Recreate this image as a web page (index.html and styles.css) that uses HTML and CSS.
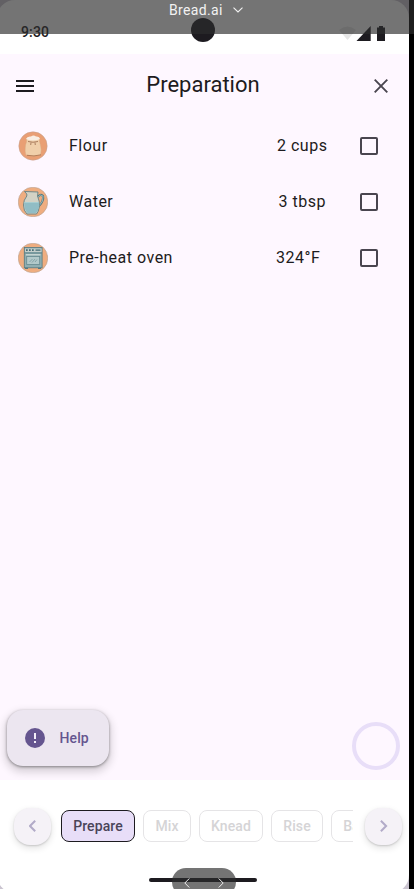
FILE: index.html
```
<!DOCTYPE html>
<html lang="en">
<head>
<meta charset="utf-8">
<title>Bread.ai</title>
<link rel="stylesheet" href="styles.css">
</head>
<body>
<div class="frame">
<div class="device">
  <header class="status">
    <span class="time">9:30</span>
    <svg class="signals" width="48" height="18" viewBox="0 0 48 18">
      <path d="M0 4Q8.500-3 17 4L8.500 14Z" fill="#e6e6e6"/>
      <path d="M17.500 15 31.700 0V15Z" fill="#1d1b20"/>
      <path d="M38 1.500h2V0h4v1.500h2V14.500q0 .5-.5.5h-7q-.5 0-.5-.5Z" fill="#1d1b20"/>
    </svg>
  </header>
  <main class="content">
    <div class="appbar">
      <svg width="18" height="12" viewBox="0 0 18 12"><path d="M0 1h18M0 6h18M0 11h18" stroke="#1d1b20" stroke-width="2"/></svg>
      <h1>Preparation</h1>
      <svg width="14" height="14" viewBox="0 0 14 14"><path d="M.7.7l12.600 12.600M13.300.7.7 13.300" stroke="#49454f" stroke-width="1.900"/></svg>
    </div>
    <ul class="list">
      <li>
        <svg class="thumb" viewBox="0 0 30 30">
          <circle cx="15" cy="15" r="14.200" fill="#e99f74" stroke="#c3a497" stroke-width=".5"/>
          <path d="M8.500 7Q9 11 7.500 14 6.500 21 8 24 15 26.500 22.500 24 24 19 22.200 13 21 10 21.500 7Z" fill="#f0cfaa" stroke="#d5a67c" stroke-width=".4"/>
          <path d="M8 8Q9 5 13 5.500 15.500 3.500 18 5.500 21.500 5 22 8 15 11 8 8Z" fill="#f8eee3"/>
          <path d="M10 10.500Q15 12 20 10.500M13 11.500 12.700 14M17 11.500l.3 2.500" fill="none" stroke="#99694b" stroke-width=".8"/>
          <path d="M9 24.300q7 1.500 14-.5" fill="none" stroke="#a66c49" stroke-width=".8"/>
        </svg>
        <span class="name">Flour</span><span class="amount cups">2 cups</span><span class="box"></span>
      </li>
      <li>
        <svg class="thumb" viewBox="0 0 30 30">
          <circle cx="15" cy="15" r="14.800" fill="#efad80" stroke="#aaa099" stroke-width=".5"/>
          <path d="M20 10Q22 6.500 25 9 26 14 21 19" fill="none" stroke="#547980" stroke-width="2.200"/>
          <path d="M20 10Q22 6.500 25 9 26 14 21 19" fill="none" stroke="#9dbbbb" stroke-width=".9"/>
          <path d="M6.500 4.500 20 5 19.500 9Q22 14 21.300 20 20.500 25 18.500 27H9Q5.500 24 5.500 18 5.500 13 8.800 9V7Z" fill="#d3d2c5" stroke="#547980" stroke-width=".8"/>
          <path d="M6.200 15H21Q22 22 18 26H9.500Q6 23 6.200 15Z" fill="#91bdc5"/>
          <path d="M6.500 15.500h14" stroke="#a9ced1"/>
        </svg>
        <span class="name">Water</span><span class="amount tbsp">3 tbsp</span><span class="box"></span>
      </li>
      <li>
        <svg class="thumb" viewBox="0 0 30 30">
          <circle cx="15" cy="15" r="14.800" fill="#efad80" stroke="#aaa099" stroke-width=".5"/>
          <path d="M7 24h3v2H7ZM20 24h3v2h-3Z" fill="#547980"/>
          <rect x="6.300" y="4.500" width="17.800" height="20.300" fill="#8faeb1" stroke="#547980" stroke-width=".8"/>
          <path d="M7 5.500h16.500v3.500H7Z" fill="#c3cecb"/>
          <path d="M8 7.200h8" stroke="#456c75" stroke-width="1.700" stroke-dasharray="1.700 1.300"/>
          <path d="M17.500 7.200h5" stroke="#456c75" stroke-width="1.300"/>
          <path d="M6.500 10h17.500" stroke="#547980" stroke-width=".8"/>
          <path d="M8 11.800h14.500" stroke="#dce4df" stroke-width="1"/>
          <rect x="8.700" y="13.500" width="13" height="8" fill="#b2c9ca" stroke="#668990" stroke-width=".8"/>
          <path d="m11.500 19 3-3m-.5 3.500 3-3.500m0 3 2-2.500" stroke="#668a91" stroke-width=".6"/>
        </svg>
        <span class="name">Pre-heat oven</span><span class="amount temp">324°F</span><span class="box"></span>
      </li>
    </ul>
    <div class="floating">
      <button class="help">
        <svg width="20" height="20" viewBox="0 0 20 20"><circle cx="10" cy="10" r="10" fill="#65558f"/><path d="M10 5v6M10 13v2" stroke="#f4eff8" stroke-width="2"/></svg>
        <span>Help</span>
      </button>
      <span class="ring"></span>
    </div>
  </main>
  <nav class="steps">
    <button class="round"><svg width="8" height="12" viewBox="0 0 8 12"><path d="M6.200.8 1 6l5.200 5.200" fill="none" stroke="#b2abc8" stroke-width="2"/></svg></button>
    <div class="chips">
      <span class="chip active">Prepare</span><span class="chip mix">Mix</span><span class="chip knead">Knead</span><span class="chip rise">Rise</span><span class="chip bake">Bake</span>
    </div>
    <button class="round"><svg width="8" height="12" viewBox="0 0 8 12"><path d="M.9.8 6.100 6 .9 11.200" fill="none" stroke="#b2abc8" stroke-width="2"/></svg></button>
  </nav>
  <div class="handle"></div>
</div>
<span class="camera"></span>
<div class="topbar"><span>Bread.ai</span><svg width="10" height="6" viewBox="0 0 10 6"><path d="m.5.7 4.500 4.300L9.500.7" fill="none" stroke="#f2f2f2" stroke-width="1.100"/></svg></div>
<div class="pager">
  <svg width="6" height="10" viewBox="0 0 6 10"><path d="M5.300.5.800 5l4.500 4.500" fill="none" stroke="#eee" stroke-width="1"/></svg>
  <svg width="6" height="10" viewBox="0 0 6 10"><path d="M.7.5 5.200 5 .7 9.500" fill="none" stroke="#eee" stroke-width="1"/></svg>
</div>
</div>
</body>
</html>
```
FILE: styles.css
```
* { box-sizing: border-box; }
body { margin: 0; background: #000; font-family: Roboto, sans-serif; color: #1d1b20; }
button { border: 0; padding: 0; font: inherit; }
.frame { position: relative; width: 414px; height: 889px; overflow: hidden; background: linear-gradient(90deg, #cac4d0 409px, #000 409px); }
.device { width: 412px; height: 893px; margin-left: -3px; padding-left: 3px; border-radius: 18px; overflow: hidden; background: #fff; }
.status { height: 54px; display: flex; justify-content: space-between; padding: 24px 22px 0 21px; }
.time { font-size: 14px; line-height: 16px; font-weight: 500; letter-spacing: .14px; }
.signals { margin-top: 2px; }
.content { height: 726px; background: #fef7ff; display: flex; flex-direction: column; }
.appbar { height: 64px; display: flex; align-items: center; justify-content: space-between; padding: 0 21px 0 16px; }
h1 { margin: 0 2px 2px 0; font-size: 22px; line-height: 28px; font-weight: 400; }
.list { list-style: none; margin: 0; padding: 0; }
.list li { height: 56px; display: flex; align-items: center; padding-left: 18px; }
.thumb { width: 30px; height: 30px; }
.name { width: 207px; margin-left: 21px; padding-bottom: 2px; font-size: 16px; letter-spacing: .5px; }
.amount { width: 84px; padding-bottom: 2px; font-size: 16px; letter-spacing: .5px; }
.cups { padding-left: 1px; }
.tbsp { padding-left: 2.5px; }
.box { width: 18px; height: 18px; border: 2px solid #49454f; border-radius: 2px; }
.floating { margin-top: auto; padding: 0 9px 10px 7px; display: flex; justify-content: space-between; align-items: flex-end; }
.help { width: 102px; height: 56px; margin-bottom: 4px; border-radius: 16px; display: flex; align-items: center; gap: 14.500px; padding-left: 18px; background: #ece6f0; color: #65558f; font-size: 14px; font-weight: 500; letter-spacing: .1px; box-shadow: 0 1px 3px rgba(0,0,0,.4), 0 4px 8px 2px rgba(0,0,0,.16); }
.ring { width: 48px; height: 48px; border: 4px solid #e8def8; border-radius: 50%; }
.steps { height: 92px; display: flex; align-items: center; padding: 0 7px 0 14px; }
.round { flex: none; width: 37px; height: 37px; border-radius: 16px; display: flex; align-items: center; justify-content: center; background: #f5f2f7; box-shadow: 0 1px 2px rgba(0,0,0,.16), 0 3px 6px 1px rgba(0,0,0,.09); }
.chips { width: 292px; margin: 0 12px 0 10px; display: flex; gap: 8px; overflow: hidden; }
.chip { flex: none; height: 32px; border: 1px solid #e5e4e6; border-radius: 8px; display: flex; align-items: center; justify-content: center; font-size: 14px; font-weight: 500; letter-spacing: .1px; color: #d5d4d6; }
.active { width: 74px; background: #e8def8; border-color: #1d1b20; color: #4a4458; }
.mix { width: 48px; }
.knead { width: 64px; }
.rise { width: 52px; }
.bake { width: 56px; }
.handle { width: 108px; height: 4px; margin: 6px 0 0 149px; border-radius: 2px; background: #1d1b20; }
.camera { position: absolute; left: 191px; top: 18px; width: 24px; height: 24px; border-radius: 50%; background: #1d1b20; }
.topbar { position: absolute; inset: 0 0 auto; height: 34px; padding: 2px 0 0 169px; display: flex; gap: 10px; background: rgba(44,44,44,.66); color: #f2f2f2; font-size: 14px; line-height: 16px; letter-spacing: .35px; }
.topbar svg { margin-top: 5px; }
.pager { position: absolute; left: 172px; top: 868px; width: 64px; height: 28px; border-radius: 14px; background: rgba(44,44,44,.66); display: flex; justify-content: space-between; padding: 10px 12px 0; }
```
